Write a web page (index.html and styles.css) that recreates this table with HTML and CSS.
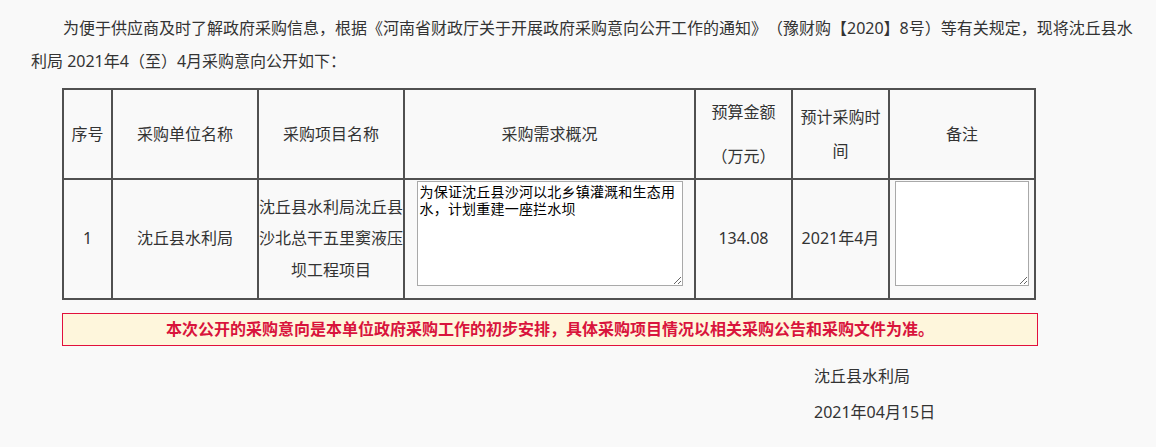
FILE: index.html
```html
<!DOCTYPE html>
<html lang="zh-CN">
<head>
    <meta charset="UTF-8">
    <meta name="viewport" content="width=device-width, initial-scale=1.0">
    <title>沈丘县水利局2021年4月政府采购意向</title>
    <link rel="stylesheet" href="styles.css">
</head>
<body>
    <div class="content">
        <p class="intro">为便于供应商及时了解政府采购信息，根据《河南省财政厅关于开展政府采购意向公开工作的通知》（豫财购【2020】8号）等有关规定，现将沈丘县水利局 2021年4（至）4月采购意向公开如下：</p>
        <table class="intent">
            <colgroup>
                <col class="c-no">
                <col class="c-unit">
                <col class="c-name">
                <col class="c-need">
                <col class="c-money">
                <col class="c-time">
                <col class="c-note">
            </colgroup>
            <tr class="head">
                <th>序号</th>
                <th>采购单位名称</th>
                <th>采购项目名称</th>
                <th>采购需求概况</th>
                <th class="money-head"><p>预算金额</p><p>（万元）</p></th>
                <th>预计采购时间</th>
                <th>备注</th>
            </tr>
            <tr class="row">
                <td>1</td>
                <td>沈丘县水利局</td>
                <td>沈丘县水利局沈丘县沙北总干五里窦液压坝工程项目</td>
                <td class="box-cell"><textarea class="need" readonly>为保证沈丘县沙河以北乡镇灌溉和生态用水，计划重建一座拦水坝</textarea></td>
                <td>134.08</td>
                <td>2021年4月</td>
                <td class="box-cell"><textarea class="note" readonly></textarea></td>
            </tr>
        </table>
        <div class="notice">本次公开的采购意向是本单位政府采购工作的初步安排，具体采购项目情况以相关采购公告和采购文件为准。</div>
        <div class="sign">
            <p>沈丘县水利局</p>
            <p>2021年04月15日</p>
        </div>
    </div>
</body>
</html>
```

FILE: styles.css
```css
body
{
    margin: 0;
    background: #f9f9f9;
    color: #333;
    font-family: "Noto Sans", "Noto Sans CJK SC", sans-serif;
    font-size: 16px;
    text-spacing-trim: space-all;
}
.content
{
    width: 1102px;
    padding: 12px 0 0 31px;
}
.intro
{
    margin: 0;
    line-height: 33px;
    text-indent: 2em;
}
.intent
{
    margin: 10px 0 0 31px;
    width: 974px;
    table-layout: fixed;
    border-collapse: collapse;
    border: 2px solid #505050;
}
.c-no { width: 49px; }
.c-unit { width: 146px; }
.c-name { width: 146px; }
.c-need { width: 291px; }
.c-money { width: 97px; }
.c-time { width: 97px; }
.c-note { width: 146px; }
.intent th,
.intent td
{
    border: 2px solid #505050;
    padding: 0;
    text-align: center;
    vertical-align: middle;
    font-weight: normal;
}
.head th
{
    height: 88px;
    line-height: 34px;
}
.money-head p
{
    margin: 0;
    line-height: 44px;
}
.row td
{
    height: 117px;
    line-height: 31.5px;
}
.intent .box-cell
{
    vertical-align: top;
    padding-top: 1px;
}
textarea
{
    display: block;
    margin: 0 auto;
    height: 105px;
    padding: 1px 2px;
    border: 1px solid #a9a9a9;
    background: #fff;
    color: #000;
    font-family: "Noto Sans CJK SC", monospace;
    font-size: 14px;
    line-height: 17px;
    letter-spacing: 0.2px;
    text-align: left;
    box-sizing: border-box;
}
.need { width: 266px; }
.note { width: 134px; }
.notice
{
    margin: 13px 0 0 31px;
    width: 976px;
    height: 33px;
    box-sizing: border-box;
    border: 1px solid #e2103c;
    background: #fef6dc;
    color: #d9143c;
    font-weight: bold;
    text-align: center;
    line-height: 31px;
}
.sign
{
    margin: 12px 0 0 783px;
}
.sign p
{
    margin: 0;
    line-height: 36px;
}
```
